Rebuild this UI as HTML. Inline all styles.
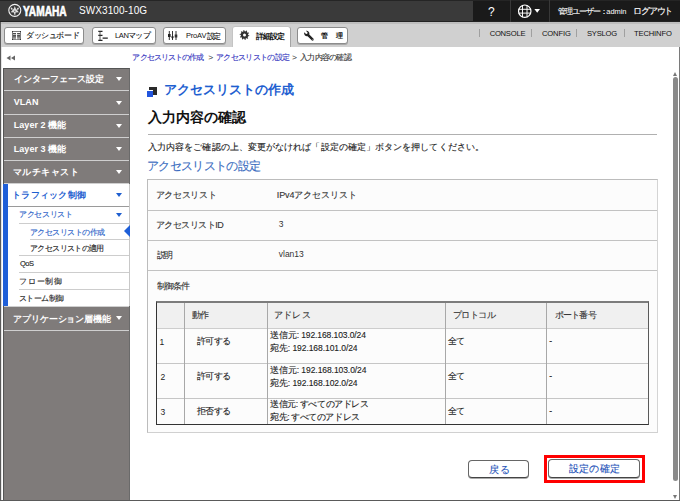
<!DOCTYPE html>
<html><head><meta charset="utf-8">
<style>
*{box-sizing:border-box;margin:0;padding:0;white-space:nowrap}
html,body{width:680px;height:501px;overflow:hidden;background:#fff}
body{position:relative;font-family:"Liberation Sans",sans-serif;color:#222}
.a{position:absolute}
.t{position:absolute;line-height:1.2;-webkit-text-stroke:0.12px currentColor}
.btn{position:absolute;background:#fff;border:1px solid #8c8c8c;border-radius:3px;box-shadow:0 1px 0 #a8a8a8}
.mi{position:absolute;left:3px;width:127px;height:22px;background:#7b7876;border-top:1px solid #5f5c5a}
.tri{position:absolute;width:0;height:0;border-left:3px solid transparent;border-right:3px solid transparent;border-top:4.5px solid #fff}
.ln{position:absolute;height:1px;background:#cdcdcd}
.vl{position:absolute;width:1px;background:#a8a8a8}
</style></head><body>
<!-- header -->
<div class="a" style="left:0;top:0;width:680px;height:22px;background:#3a3a3a"></div>
<div class="a" style="left:473px;top:0;width:207px;height:22px;background:#1a1a1a"></div>
<div class="a" style="left:0;top:0;width:680px;height:1px;background:#252525"></div>
<div class="a" style="left:0;top:21px;width:680px;height:1px;background:#222"></div>
<div class="a" style="left:510px;top:0;width:1px;height:22px;background:#383838"></div>
<div class="a" style="left:549px;top:0;width:1px;height:22px;background:#383838"></div>
<svg class="a" style="left:6px;top:2px" width="18" height="18" viewBox="6 2 18 18">
<circle cx="14.8" cy="10.35" r="6" fill="none" stroke="#f2f2f2" stroke-width="1.1"/>
<path d="M14.8 5.9 L15.7 8.6 L18.9 12.3 L15.6 12.5 L15.4 14.7 L14.2 14.7 L14 12.5 L10.7 12.3 L13.9 8.6 Z" fill="#dcdcdc"/>
<circle cx="14.8" cy="11.2" r="0.7" fill="#555"/>
<ellipse cx="11.7" cy="8.7" rx="0.8" ry="1.2" transform="rotate(-35 11.7 8.7)" fill="#e0e0e0"/>
<ellipse cx="17.9" cy="8.7" rx="0.8" ry="1.2" transform="rotate(35 17.9 8.7)" fill="#e0e0e0"/>
</svg>
<div class="a" style="left:23px;top:2px;font-size:15.5px;line-height:18px;font-weight:bold;color:#fff;transform:scaleX(0.655);transform-origin:0 0;-webkit-text-stroke:0.7px #fff">YAMAHA</div>
<svg class="a" style="left:517px;top:4px" width="24" height="15" viewBox="0 0 24 15">
<circle cx="7.75" cy="7.2" r="6.2" fill="none" stroke="#fff" stroke-width="1.2"/>
<path d="M5.5 1.2V13.2 M10 1.2V13.2 M1.5 5.3H14 M1.5 9.1H14" stroke="#fff" stroke-width="0.95" fill="none"/>
<path d="M17.4 5 L23 5 L20.2 8.8Z" fill="#fff"/>
</svg>

<!-- toolbar -->
<div class="a" style="left:0;top:22px;width:680px;height:25px;background:#d0d0d0"></div>
<div class="a" style="left:0;top:22px;width:680px;height:2px;background:#bdbdbd"></div>
<div class="btn" style="left:4px;top:27px;width:80px;height:17px"></div>
<svg class="a" style="left:12px;top:31px" width="9" height="9" viewBox="0 0 9 9">
<defs><linearGradient id="dg" x1="0" y1="0" x2="0" y2="1"><stop offset="0" stop-color="#444"/><stop offset="1" stop-color="#b8b8b8"/></linearGradient></defs>
<rect x="0.4" y="0.4" width="8.2" height="8.2" fill="#fff" stroke="#5a5a5a" stroke-width="0.8"/>
<rect x="1" y="2.2" width="7" height="1.1" fill="#222"/>
<rect x="1" y="4" width="7" height="4.2" fill="url(#dg)"/>
<rect x="4" y="1" width="1.1" height="7.2" fill="#fff"/>
<rect x="0" y="0" width="1" height="1" fill="#333"/><rect x="8" y="0" width="1" height="1" fill="#333"/>
<rect x="0" y="8" width="1" height="1" fill="#333"/><rect x="8" y="8" width="1" height="1" fill="#333"/>
</svg>
<div class="btn" style="left:92px;top:27px;width:64px;height:17px"></div>
<svg class="a" style="left:98px;top:30px" width="11" height="12" viewBox="0 0 11 12">
<path d="M0.3 1.3H4.5 M0.3 5.3H4.5 M0.3 10.3H4.5 M9.8 8.2H4.6" stroke="#222" stroke-width="1.2" fill="none"/>
<path d="M2 1V10.5" stroke="#444" stroke-width="0.9"/>
</svg>
<div class="btn" style="left:163px;top:27px;width:63px;height:17px"></div>
<svg class="a" style="left:167px;top:30px" width="11" height="11" viewBox="0 0 11 11">
<path d="M2.3 1V10 M5.5 1V10 M9 1V10" stroke="#333" stroke-width="1"/>
<rect x="1" y="4" width="2.6" height="3" fill="#222"/>
<path d="M4 6.5H7L5.5 9.5Z" fill="#222"/>
<rect x="7.7" y="4.5" width="2.6" height="3" fill="#333"/>
</svg>
<div class="a" style="left:233px;top:27px;width:57px;height:20px;background:#fff;border-radius:2px 2px 0 0;box-shadow:1px 0 0 #a4a4a4,-1px 0 0 #c4c4c4,0 -1px 0 #c4c4c4"></div>
<svg class="a" style="left:239px;top:30px" width="11" height="10" viewBox="0 0 11 10">
<circle cx="5.5" cy="5" r="2.6" fill="none" stroke="#333" stroke-width="2.2"/>
<path d="M7.96 5.43L9.83 5.76M7.24 6.80L8.56 8.17M5.85 7.48L6.11 9.36M4.33 7.21L3.43 8.88M3.25 6.10L1.55 6.93M3.04 4.57L1.17 4.24M3.76 3.20L2.44 1.83M5.15 2.52L4.89 0.64M6.67 2.79L7.57 1.12M7.75 3.90L9.45 3.07" stroke="#333" stroke-width="1.1" stroke-linecap="round"/>
</svg>
<div class="btn" style="left:297px;top:27px;width:51px;height:17px"></div>
<svg class="a" style="left:303px;top:30px" width="12" height="12" viewBox="0 0 12 12">
<path d="M1.3 2.3 L3 4 L4.3 3.7 L4.6 2.4 L2.9 0.8 A2.9 2.9 0 0 1 6.3 4.5 L10.8 9 A1.3 1.3 0 0 1 9.2 10.7 L4.6 6.2 A2.9 2.9 0 0 1 1.3 2.3 Z" fill="#222"/>
<circle cx="10" cy="9.8" r="0.55" fill="#fff"/>
</svg>
<div class="a" style="left:479px;top:29px;width:1px;height:8px;background:#a0a0a0"></div>
<div class="a" style="left:531px;top:29px;width:1px;height:8px;background:#a0a0a0"></div>
<div class="a" style="left:576px;top:29px;width:1px;height:8px;background:#a0a0a0"></div>
<div class="a" style="left:624px;top:29px;width:1px;height:8px;background:#a0a0a0"></div>

<!-- frame -->
<div class="a" style="left:0;top:22px;width:1px;height:479px;background:#5a5a5a"></div>
<div class="a" style="left:679px;top:47px;width:1px;height:454px;background:#7a7a7a"></div>
<div class="a" style="left:0;top:500px;width:680px;height:1px;background:#5a5a5a"></div>

<!-- sidebar -->
<div class="a" style="left:1px;top:47px;width:1px;height:453px;background:#e4e4e4"></div>
<svg class="a" style="left:6px;top:55px" width="10" height="6" viewBox="0 0 10 6">
<path d="M0.5 3 L4.5 0.5 V5.5Z M5 3 L9 0.5 V5.5Z" fill="#666"/>
</svg>
<div class="a" style="left:3px;top:68px;width:127px;height:432px;background:#7f7b7a;border-top:1px solid #555;border-left:1px solid #555;border-right:1px solid #6a6a6a"></div>
<div class="ln" style="left:4px;top:90px;width:125px;background:#cfcfcf"></div>
<div class="ln" style="left:4px;top:114px;width:125px;background:#cfcfcf"></div>
<div class="ln" style="left:4px;top:137px;width:125px;background:#cfcfcf"></div>
<div class="ln" style="left:4px;top:160px;width:125px;background:#cfcfcf"></div>
<div class="ln" style="left:4px;top:183px;width:125px;background:#cfcfcf"></div>
<div class="ln" style="left:4px;top:306px;width:125px;background:#cfcfcf"></div>
<div class="ln" style="left:4px;top:330px;width:125px;background:#cfcfcf"></div>
<i class="tri" style="left:116px;top:77px"></i>
<i class="tri" style="left:116px;top:101px"></i>
<i class="tri" style="left:116px;top:124px"></i>
<i class="tri" style="left:116px;top:147px"></i>
<i class="tri" style="left:116px;top:170px"></i>
<i class="tri" style="left:116px;top:316px"></i>
<!-- expanded -->
<div class="a" style="left:3px;top:184px;width:127px;height:122px;background:#fff;border-right:1px solid #c8c8c8"></div>
<div class="a" style="left:3px;top:184px;width:5px;height:122px;background:#1f5fd8"></div>
<i class="tri" style="left:116px;top:193px;border-top-color:#1f5fd0"></i>
<div class="ln" style="left:8px;top:206px;width:121px;background:#9a9a9a"></div>
<i class="tri" style="left:116px;top:213px;border-top-color:#1f5fd0"></i>
<div class="ln" style="left:19px;top:223px;width:110px"></div>
<i class="a" style="left:124px;top:225px;width:0;height:0;border-top:6.5px solid transparent;border-bottom:6.5px solid transparent;border-right:6px solid #1f5fd8"></i>
<div class="ln" style="left:30px;top:239px;width:99px"></div>
<div class="ln" style="left:19px;top:255px;width:110px"></div>
<div class="ln" style="left:19px;top:272px;width:110px"></div>
<div class="ln" style="left:19px;top:289px;width:110px"></div>

<!-- content -->
<div class="a" style="left:149px;top:87px;width:8px;height:8px;background:#2a2a2a"></div>
<div class="a" style="left:146px;top:90px;width:7px;height:7px;background:#fff"></div>
<div class="a" style="left:147px;top:91px;width:5.5px;height:5.5px;background:#2255dd"></div>
<div class="a" style="left:148px;top:134px;width:509px;height:1px;background:#b0b0b0"></div>

<div class="a" style="left:147px;top:179px;width:511px;height:254px;background:#fcfcfc;border:1px solid #bcbcbc;border-right-color:#d4d4d4;border-bottom-color:#d0d0d0"></div>
<div class="ln" style="left:148px;top:210px;width:509px;background:#c2c2c2"></div>
<div class="ln" style="left:148px;top:240px;width:509px;background:#c2c2c2"></div>
<div class="ln" style="left:148px;top:270px;width:509px;background:#c2c2c2"></div>

<!-- inner table -->
<div class="a" style="left:156px;top:301px;width:493px;height:124px;background:#fcfcfc;border-style:solid;border-color:#7c7c7c #5a5a5a #333 #333;border-width:2px 1px 1px 1px"></div>
<div class="a" style="left:157px;top:303px;width:491px;height:25px;background:#f0f0f0"></div>
<div class="ln" style="left:157px;top:328px;width:491px;background:#cdcdcd"></div>
<div class="ln" style="left:157px;top:363px;width:491px;background:#c6c6c6"></div>
<div class="ln" style="left:157px;top:398px;width:491px;background:#c6c6c6"></div>
<div class="vl" style="left:184px;top:303px;height:121px"></div>
<div class="vl" style="left:267px;top:303px;height:121px"></div>
<div class="vl" style="left:445px;top:303px;height:121px"></div>
<div class="vl" style="left:546px;top:303px;height:121px"></div>

<!-- buttons -->
<div class="a" style="left:468px;top:460px;width:61px;height:18px;background:#fff;border:1px solid #666;border-bottom-color:#444;border-radius:4px;box-shadow:0 1px 0 #aaa"></div>
<div class="a" style="left:544px;top:455px;width:101px;height:28px;border:3px solid #f00"></div>
<div class="a" style="left:548px;top:459px;width:92px;height:19px;background:#fff;border:1px solid #666;border-bottom-color:#444;border-radius:4px;box-shadow:0 1px 0 #aaa"></div>

<!-- scrollbar -->
<div class="a" style="left:673px;top:72px;width:0;height:0;border-left:2.5px solid transparent;border-right:2.5px solid transparent;border-bottom:4px solid #777"></div>
<div class="a" style="left:673px;top:77px;width:5px;height:404px;background:#8a8a8a;border-radius:2.5px"></div>
<div class="a" style="left:673px;top:495px;width:0;height:0;border-left:2.5px solid transparent;border-right:2.5px solid transparent;border-top:4px solid #777"></div>

<div class="t" style="left:79.0px;top:5.4px;font-size:10px;color:#fff;letter-spacing:0.08px;-webkit-text-stroke:0">SWX3100-10G</div>
<div class="t" style="left:487.9px;top:4.8px;font-size:12px;color:#fff;-webkit-text-stroke:0">?</div>
<div class="t" style="left:557.8px;top:6.8px;font-size:8px;color:#fff;letter-spacing:-0.97px">管理ユーザー：</div>
<div class="t" style="left:606.3px;top:6.8px;font-size:7.5px;color:#fff;letter-spacing:-0.05px;-webkit-text-stroke:0">admin</div>
<div class="t" style="left:633.0px;top:5.8px;font-size:8.5px;color:#fff;letter-spacing:-1.15px">ログアウト</div>
<div class="t" style="left:26.4px;top:31.4px;font-size:8px;color:#111;letter-spacing:-0.48px">ダッシュボード</div>
<div class="t" style="left:114.9px;top:31.1px;font-size:7.5px;color:#111;letter-spacing:-0.25px;-webkit-text-stroke:0">LAN</div>
<div class="t" style="left:127.8px;top:31.3px;font-size:7.5px;color:#111;letter-spacing:-0.50px">マップ</div>
<div class="t" style="left:185.9px;top:31.0px;font-size:7.5px;color:#111;letter-spacing:-0.15px;-webkit-text-stroke:0">ProAV</div>
<div class="t" style="left:206.6px;top:31.5px;font-size:7.5px;color:#111;letter-spacing:-1.40px">設定</div>
<div class="t" style="left:256.3px;top:31.9px;font-size:8px;color:#111;font-weight:700;-webkit-text-stroke:0;letter-spacing:-0.97px">詳細設定</div>
<div class="t" style="left:321.0px;top:32.2px;font-size:7px;color:#111;font-weight:700;-webkit-text-stroke:0">管</div>
<div class="t" style="left:335.5px;top:32.2px;font-size:7px;color:#111;font-weight:700;-webkit-text-stroke:0">理</div>
<div class="t" style="left:489.7px;top:28.8px;font-size:7.6px;color:#111;letter-spacing:-0.23px;-webkit-text-stroke:0">CONSOLE</div>
<div class="t" style="left:542.0px;top:28.8px;font-size:7.6px;color:#111;letter-spacing:-0.14px;-webkit-text-stroke:0">CONFIG</div>
<div class="t" style="left:587.0px;top:28.8px;font-size:7.6px;color:#111;letter-spacing:-0.20px;-webkit-text-stroke:0">SYSLOG</div>
<div class="t" style="left:634.0px;top:28.8px;font-size:7.6px;color:#111;letter-spacing:-0.14px;-webkit-text-stroke:0">TECHINFO</div>
<div class="t" style="left:14.0px;top:73.8px;font-size:9px;color:#fff;font-weight:700;-webkit-text-stroke:0">インターフェース設定</div>
<div class="t" style="left:13.8px;top:97.0px;font-size:9px;color:#fff;font-weight:700;-webkit-text-stroke:0;letter-spacing:0.03px">VLAN</div>
<div class="t" style="left:13.8px;top:120.4px;font-size:9px;color:#fff;font-weight:700;-webkit-text-stroke:0;letter-spacing:0.03px">Layer 2 機能</div>
<div class="t" style="left:13.8px;top:143.6px;font-size:9px;color:#fff;font-weight:700;-webkit-text-stroke:0;letter-spacing:0.03px">Layer 3 機能</div>
<div class="t" style="left:12.8px;top:166.7px;font-size:9px;color:#fff;font-weight:700;-webkit-text-stroke:0;letter-spacing:0.53px">マルチキャスト</div>
<div class="t" style="left:12.0px;top:189.6px;font-size:8.5px;color:#1f5fd0;font-weight:700;-webkit-text-stroke:0;letter-spacing:0.29px">トラフィック制御</div>
<div class="t" style="left:19.0px;top:210.0px;font-size:8px;color:#2a62c8;letter-spacing:-0.33px">アクセスリスト</div>
<div class="t" style="left:30.0px;top:227.5px;font-size:8px;color:#2a62c8;letter-spacing:-0.56px">アクセスリストの作成</div>
<div class="t" style="left:30.0px;top:243.5px;font-size:8px;color:#222;letter-spacing:-0.62px">アクセスリストの適用</div>
<div class="t" style="left:20.0px;top:259.2px;font-size:7.5px;color:#222;letter-spacing:-0.50px">QoS</div>
<div class="t" style="left:19.0px;top:277.2px;font-size:8px;color:#222;letter-spacing:0.75px">フロー制御</div>
<div class="t" style="left:19.0px;top:294.2px;font-size:8px;color:#222;letter-spacing:-0.60px">ストーム制御</div>
<div class="t" style="left:13.0px;top:313.8px;font-size:8.5px;color:#fff;font-weight:700;-webkit-text-stroke:0;letter-spacing:-0.10px">アプリケーション層機能</div>
<div class="t" style="left:132.4px;top:53.4px;font-size:8px;color:#3535c0;letter-spacing:-0.89px">アクセスリストの作成</div>
<div class="t" style="left:208.5px;top:53.0px;font-size:8px;color:#444">></div>
<div class="t" style="left:216.0px;top:53.4px;font-size:8px;color:#3535c0;letter-spacing:-0.68px">アクセスリストの設定</div>
<div class="t" style="left:292.3px;top:53.0px;font-size:8px;color:#444">></div>
<div class="t" style="left:300.0px;top:53.4px;font-size:8px;color:#333;letter-spacing:-0.73px">入力内容の確認</div>
<div class="t" style="left:164.0px;top:82.2px;font-size:13px;color:#1f5fd0;font-weight:700;-webkit-text-stroke:0;letter-spacing:0.04px">アクセスリストの作成</div>
<div class="t" style="left:148.2px;top:108.7px;font-size:14px;color:#111;font-weight:700;-webkit-text-stroke:0;letter-spacing:-0.03px">入力内容の確認</div>
<div class="t" style="left:148.0px;top:141.8px;font-size:9px;color:#222;letter-spacing:0.08px">入力内容をご確認の上、変更がなければ「設定の確定」ボタンを押してください。</div>
<div class="t" style="left:147.0px;top:159.6px;font-size:11.5px;color:#3a6cc0;letter-spacing:-0.67px">アクセスリストの設定</div>
<div class="t" style="left:155.5px;top:189.7px;font-size:9px;color:#333;letter-spacing:-0.30px">アクセスリスト</div>
<div class="t" style="left:276.8px;top:189.7px;font-size:9px;color:#333;letter-spacing:-0.13px">IPv4アクセスリスト</div>
<div class="t" style="left:155.5px;top:220.4px;font-size:9px;color:#333;letter-spacing:-0.46px">アクセスリストID</div>
<div class="t" style="left:278.8px;top:218.8px;font-size:8.5px;color:#333;-webkit-text-stroke:0">3</div>
<div class="t" style="left:156.5px;top:249.9px;font-size:9px;color:#333;letter-spacing:-1.90px">説明</div>
<div class="t" style="left:278.8px;top:249.3px;font-size:8.5px;color:#333;letter-spacing:-0.02px;-webkit-text-stroke:0">vlan13</div>
<div class="t" style="left:156.6px;top:280.9px;font-size:9px;color:#333;letter-spacing:-0.97px">制御条件</div>
<div class="t" style="left:192.4px;top:309.9px;font-size:8.5px;color:#333;letter-spacing:-1.10px">動作</div>
<div class="t" style="left:274.3px;top:309.9px;font-size:8.5px;color:#333;letter-spacing:0.07px">アドレス</div>
<div class="t" style="left:452.7px;top:310.4px;font-size:8.5px;color:#333;letter-spacing:-0.50px">プロトコル</div>
<div class="t" style="left:554.6px;top:309.9px;font-size:8.5px;color:#333;letter-spacing:-0.72px">ポート番号</div>
<div class="t" style="left:159.6px;top:337.2px;font-size:8.5px;color:#222;-webkit-text-stroke:0">1</div>
<div class="t" style="left:196.6px;top:335.8px;font-size:8.5px;color:#222;letter-spacing:-0.37px">許可する</div>
<div class="t" style="left:270.0px;top:330.1px;font-size:8.5px;color:#222;letter-spacing:-0.10px">送信元: 192.168.103.0/24</div>
<div class="t" style="left:270.0px;top:343.0px;font-size:8.5px;color:#222;letter-spacing:-0.07px">宛先: 192.168.101.0/24</div>
<div class="t" style="left:447.5px;top:336.2px;font-size:8.5px;color:#222;letter-spacing:-0.50px">全て</div>
<div class="t" style="left:549.3px;top:336.0px;font-size:8.5px;color:#222">-</div>
<div class="t" style="left:160.6px;top:372.2px;font-size:8.5px;color:#222;-webkit-text-stroke:0">2</div>
<div class="t" style="left:196.6px;top:370.8px;font-size:8.5px;color:#222;letter-spacing:-0.37px">許可する</div>
<div class="t" style="left:270.0px;top:364.7px;font-size:8.5px;color:#222;letter-spacing:-0.07px">送信元: 192.168.103.0/24</div>
<div class="t" style="left:270.0px;top:378.1px;font-size:8.5px;color:#222;letter-spacing:-0.07px">宛先: 192.168.102.0/24</div>
<div class="t" style="left:447.5px;top:371.2px;font-size:8.5px;color:#222;letter-spacing:-0.50px">全て</div>
<div class="t" style="left:549.3px;top:371.0px;font-size:8.5px;color:#222">-</div>
<div class="t" style="left:160.6px;top:406.7px;font-size:8.5px;color:#222;-webkit-text-stroke:0">3</div>
<div class="t" style="left:196.6px;top:405.8px;font-size:8.5px;color:#222;letter-spacing:-0.37px">拒否する</div>
<div class="t" style="left:270.0px;top:399.1px;font-size:8.5px;color:#222;letter-spacing:-0.40px">送信元: すべてのアドレス</div>
<div class="t" style="left:270.0px;top:412.0px;font-size:8.5px;color:#222;letter-spacing:-0.42px">宛先: すべてのアドレス</div>
<div class="t" style="left:447.5px;top:406.2px;font-size:8.5px;color:#222;letter-spacing:-0.50px">全て</div>
<div class="t" style="left:549.3px;top:405.5px;font-size:8.5px;color:#222">-</div>
<div class="t" style="left:488.5px;top:463.5px;font-size:10px;color:#2250b8;letter-spacing:1.00px">戻る</div>
<div class="t" style="left:568.8px;top:462.5px;font-size:10px;color:#2250b8;letter-spacing:0.25px">設定の確定</div>
</body></html>
